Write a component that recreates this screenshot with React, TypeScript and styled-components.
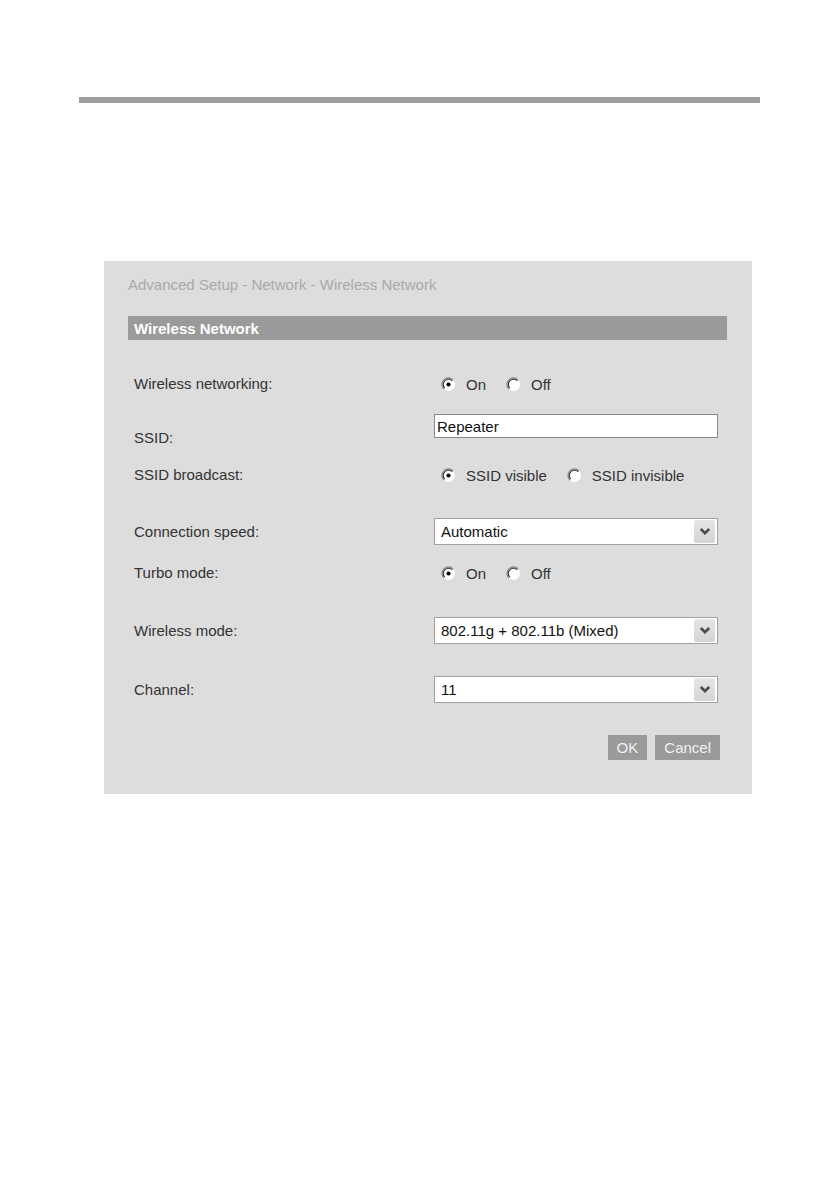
import React from 'react';
import styled, { createGlobalStyle } from 'styled-components';

const GlobalStyle = createGlobalStyle`
	html, body {
		margin: 0;
		padding: 0;
		background: #fff;
	}
	body {
		font-family: 'Liberation Sans', Arial, sans-serif;
	}
`;

const Page = styled.div`
	width: 839px;
	min-height: 1191px;
	padding-top: 97px;
	box-sizing: border-box;
`;

const TopRule = styled.div`
	height: 6px;
	margin: 0 79px;
	background: #9d9d9d;
`;

const Panel = styled.div`
	width: 648px;
	margin: 158px 0 0 104px;
	padding: 15px 25px 34px 24px;
	box-sizing: border-box;
	background: #dddddd;
	color: #333;
	font-size: 15px;
`;

const Breadcrumb = styled.div`
	line-height: 18px;
	color: #a9a9a9;
`;

const SectionBar = styled.div`
	margin-top: 22px;
	height: 24px;
	padding-left: 6px;
	display: flex;
	align-items: center;
	background: #9a9a9a;
	color: #fff;
	font-weight: bold;
`;

const Row = styled.div<{ $gap: number }>`
	display: flex;
	align-items: center;
	height: 26px;
	margin-top: ${(p) => p.$gap}px;
`;

const Label = styled.div<{ $shift?: number }>`
	width: 306px;
	padding-left: 6px;
	padding-top: ${(p) => p.$shift || 0}px;
	box-sizing: border-box;
	flex-shrink: 0;
`;

const Control = styled.div`
	width: 284px;
	display: flex;
	align-items: center;
`;

const RadioGroup = styled.div`
	display: flex;
	align-items: center;
	gap: 20px;
	padding-left: 7px;
	padding-top: 2px;
`;

const RadioOption = styled.label`
	display: flex;
	align-items: center;
	gap: 10px;
`;

const TextBox = styled.div`
	width: 284px;
	height: 24px;
	box-sizing: border-box;
	border: 1px solid #8a8a8a;
	background: #fff;
	color: #111;
	padding-left: 2px;
	display: flex;
	align-items: center;
	align-self: flex-start;
`;

const SelectBox = styled.div`
	width: 284px;
	height: 27px;
	box-sizing: border-box;
	border: 1px solid #a0a0a0;
	background: #fff;
	color: #111;
	display: flex;
	align-items: center;
	justify-content: space-between;
	padding: 0 2px 0 6px;
`;

const ArrowButton = styled.div`
	width: 21px;
	height: 23px;
	display: flex;
	align-items: center;
	justify-content: center;
	background: linear-gradient(#e6e6e6, #d4d4d4);
	border-radius: 2px;
`;

const Buttons = styled.div`
	display: flex;
	justify-content: flex-end;
	gap: 8px;
	margin-top: 33px;
	padding-right: 7px;
`;

const Button = styled.button`
	height: 25px;
	padding: 0 9px;
	border: none;
	background: #9a9a9a;
	color: #f2f2f2;
	font-family: inherit;
	font-size: 15px;
`;

const Radio = ({ checked }: { checked?: boolean }) => (
	<svg width="15" height="15" viewBox="0 0 15 15">
		<circle cx="7.5" cy="7.5" r="6.5" fill="#fff" />
		<path d="M2.9 12.1 A6.5 6.5 0 0 1 12.1 2.9" fill="none" stroke="#8a8a8a" strokeWidth="1.3" />
		<path d="M3.8 11.2 A5.2 5.2 0 0 1 11.2 3.8" fill="none" stroke="#333" strokeWidth="1.1" />
		{checked && <circle cx="7.5" cy="7.5" r="2.1" fill="#000" />}
	</svg>
);

const Chevron = () => (
	<svg width="12" height="9" viewBox="0 0 12 9">
		<path d="M1.8 2 L6 6.2 L10.2 2" fill="none" stroke="#4a4a4a" strokeWidth="2.6" />
	</svg>
);

const Radios = ({ options, selected }: { options: string[]; selected: number }) => (
	<RadioGroup>
		{options.map((o, i) => (
			<RadioOption key={o}>
				<Radio checked={i === selected} />
				{o}
			</RadioOption>
		))}
	</RadioGroup>
);

const Select = ({ value }: { value: string }) => (
	<SelectBox>
		{value}
		<ArrowButton>
			<Chevron />
		</ArrowButton>
	</SelectBox>
);

const App = () => {
	return (
		<Page>
			<GlobalStyle />
			<TopRule />
			<Panel>
				<Breadcrumb>Advanced Setup - Network - Wireless Network</Breadcrumb>
				<SectionBar>Wireless Network</SectionBar>

				<Row $gap={30}>
					<Label>Wireless networking:</Label>
					<Control>
						<Radios options={['On', 'Off']} selected={0} />
					</Control>
				</Row>

				<Row $gap={17}>
					<Label $shift={22}>SSID:</Label>
					<Control>
						<TextBox>Repeater</TextBox>
					</Control>
				</Row>

				<Row $gap={22}>
					<Label>SSID broadcast:</Label>
					<Control>
						<Radios options={['SSID visible', 'SSID invisible']} selected={0} />
					</Control>
				</Row>

				<Row $gap={31}>
					<Label>Connection speed:</Label>
					<Control>
						<Select value="Automatic" />
					</Control>
				</Row>

				<Row $gap={15}>
					<Label>Turbo mode:</Label>
					<Control>
						<Radios options={['On', 'Off']} selected={0} />
					</Control>
				</Row>

				<Row $gap={32}>
					<Label>Wireless mode:</Label>
					<Control>
						<Select value="802.11g + 802.11b (Mixed)" />
					</Control>
				</Row>

				<Row $gap={33}>
					<Label>Channel:</Label>
					<Control>
						<Select value="11" />
					</Control>
				</Row>

				<Buttons>
					<Button>OK</Button>
					<Button>Cancel</Button>
				</Buttons>
			</Panel>
		</Page>
	);
};

export default App;
